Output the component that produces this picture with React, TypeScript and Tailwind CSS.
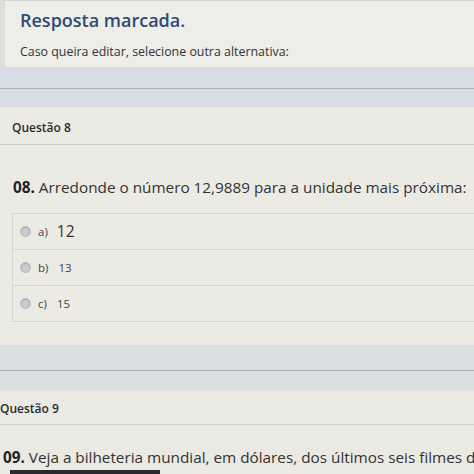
import React from "react";

const font = { fontFamily: '"Open Sans", "Noto Sans", sans-serif' };

function Option({ letter, value, big }: { letter: string; value: string; big?: boolean }) {
  return (
    <div className="h-[36px] border-b border-[#d6d6cc] flex items-center pl-[7px]">
      <div className="w-[11px] h-[11px] rounded-full bg-[#c9cbd0] border border-[#b8bac0] shadow-[inset_0_1px_1px_rgba(0,0,0,0.15)]" />
      <span className="ml-[7px] text-[11.5px] text-[#444]">{letter}</span>
      <span className={big ? "ml-[9px] text-[15.5px] text-[#333]" : "ml-[10px] text-[11.5px] text-[#444]"}>{value}</span>
    </div>
  );
}

export default function App() {
  return (
    <div style={font} className="w-[474px] h-[474px] overflow-hidden bg-[#dcdfdc] flex flex-col">
      {/* Top card */}
      <div className="ml-[5px] h-[67px] bg-[#edeee8] border-t border-[#d4d6d4] pl-[15px] pt-[7px] shrink-0">
        <div className="text-[18px] leading-[24px] font-semibold text-[#2f4a78]">Resposta marcada.</div>
        <div className="mt-[12px] text-[12.4px] leading-[16px] text-[#333]">
          Caso queira editar, selecione outra alternativa:
        </div>
      </div>

      {/* Band */}
      <div className="h-[40px] bg-[#d6dce3] flex flex-col shrink-0">
        <div className="h-[21px]" />
        <div className="h-px bg-[#a9afb6]" />
      </div>

      {/* Questão 8 card */}
      <div className="h-[238px] bg-[#ecebe3] flex flex-col shrink-0">
        <div className="h-[38px] border-b border-[#cfd0c8] pl-[12px] pt-[13px]">
          <div className="text-[12px] leading-[16px] font-semibold text-[#2b2b2b]">Questão 8</div>
        </div>
        <div className="pl-[13px] pt-[32px] text-[15.3px] leading-[20px] text-[#333] whitespace-nowrap">
          <span className="font-bold text-[#222]">08.</span> Arredonde o número 12,9889 para a unidade mais próxima:
        </div>
        <div className="ml-[12px] mt-[16px] border-l border-t border-[#d6d6cc]">
          <Option letter="a)" value="12" big />
          <Option letter="b)" value="13" />
          <Option letter="c)" value="15" />
        </div>
      </div>

      {/* Band 2 */}
      <div className="h-[45px] bg-[#dcdfe1] flex flex-col shrink-0">
        <div className="h-[25px]" />
        <div className="h-px bg-[#aab0b4]" />
      </div>

      {/* Questão 9 */}
      <div className="flex-1 bg-[#eae9e2] flex flex-col">
        <div className="h-[35px] border-b border-[#d0d0c8] pt-[11px]">
          <div className="text-[12px] leading-[16px] font-semibold text-[#2b2b2b]">Questão 9</div>
        </div>
        <div className="pl-[3px] pt-[22px] text-[15.3px] leading-[20px] text-[#333] whitespace-nowrap">
          <span className="font-bold text-[#222]">09.</span> Veja a bilheteria mundial, em dólares, dos últimos seis filmes d
        </div>
        <div className="ml-[10px] mt-[3px] w-[150px] h-[10px] bg-[#2a2a2c]" />
      </div>
    </div>
  );
}
